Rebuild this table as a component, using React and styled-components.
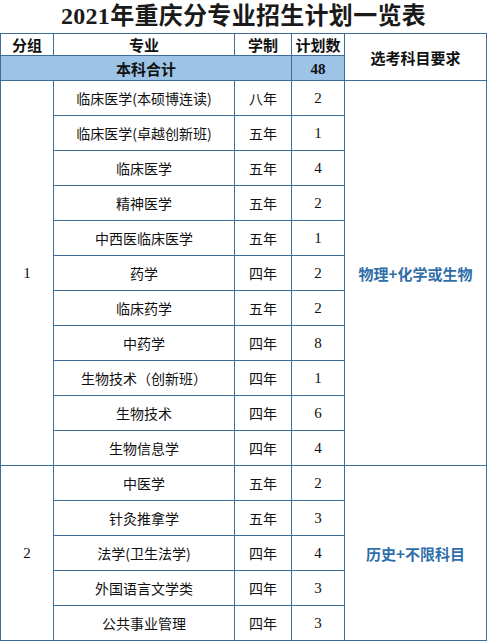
import styled, { createGlobalStyle } from "styled-components"

const lineColor = "#3f6d99"

const GlobalStyle = createGlobalStyle`
    body {
        margin: 0;
        background: #ffffff;
        font-family: "Noto Sans CJK SC", "Liberation Sans", sans-serif;
        color: #111;
    }
`;

const Page = styled.div`
    width: 487px;
    display: flex;
    flex-direction: column;
`;

const Title = styled.h1`
    margin: 0;
    height: 33px;
    line-height: 33px;
    text-align: center;
    font-family: "Liberation Serif", "Noto Sans CJK SC", serif;
    font-size: 24px;
    font-weight: 700;
    color: #1a1a1a;
    letter-spacing: 0.3px;
`;

const Table = styled.table`
    width: 486px;
    border-collapse: collapse;
    table-layout: fixed;
`;

const Cell = styled.td`
    border: 1px solid ${lineColor};
    padding: 0;
    height: ${(p) => p.$h || 34}px;
    text-align: center;
    vertical-align: middle;
    font-size: ${(p) => (p.$bold ? 15 : 14)}px;
    font-weight: ${(p) => (p.$bold ? 700 : 400)};
    background: ${(p) => (p.$fill ? "#9dc3e6" : "#ffffff")};
    color: ${(p) => (p.$blue ? "#2f6ea9" : "#111")};
    white-space: nowrap;
    line-height: 1;
`;

const Num = styled.span`
    font-family: "Liberation Serif", "Noto Sans CJK SC", serif;
    font-size: 15px;
`;

const groups = [
    {
        id: "1",
        need: "物理+化学或生物",
        rows: [
            ["临床医学(本硕博连读)", "八年", "2"],
            ["临床医学(卓越创新班)", "五年", "1"],
            ["临床医学", "五年", "4"],
            ["精神医学", "五年", "2"],
            ["中西医临床医学", "五年", "1"],
            ["药学", "四年", "2"],
            ["临床药学", "五年", "2"],
            ["中药学", "四年", "8"],
            ["生物技术（创新班）", "四年", "1"],
            ["生物技术", "四年", "6"],
            ["生物信息学", "四年", "4"],
        ],
    },
    {
        id: "2",
        need: "历史+不限科目",
        rows: [
            ["中医学", "五年", "2"],
            ["针灸推拿学", "五年", "3"],
            ["法学(卫生法学)", "四年", "4"],
            ["外国语言文学类", "四年", "3"],
            ["公共事业管理", "四年", "3"],
        ],
    },
]

function App() {
    return (
        <Page>
            <GlobalStyle />
            <Title>2021年重庆分专业招生计划一览表</Title>
            <Table>
                <colgroup>
                    <col style={{ width: 53 }} />
                    <col style={{ width: 181 }} />
                    <col style={{ width: 57 }} />
                    <col style={{ width: 53 }} />
                    <col style={{ width: 142 }} />
                </colgroup>
                <tbody>
                    <tr>
                        <Cell $bold $h={21}>分组</Cell>
                        <Cell $bold $h={21}>专业</Cell>
                        <Cell $bold $h={21}>学制</Cell>
                        <Cell $bold $h={21}>计划数</Cell>
                        <Cell $bold rowSpan={2}>选考科目要求</Cell>
                    </tr>
                    <tr>
                        <Cell $bold $fill $h={24} colSpan={3}>本科合计</Cell>
                        <Cell $bold $fill $h={24}><Num>48</Num></Cell>
                    </tr>
                    {groups.map((g) =>
                        g.rows.map((r, i) => (
                            <tr key={g.id + r[0]}>
                                {i === 0 && (
                                    <Cell rowSpan={g.rows.length}><Num>{g.id}</Num></Cell>
                                )}
                                <Cell>{r[0]}</Cell>
                                <Cell>{r[1]}</Cell>
                                <Cell><Num>{r[2]}</Num></Cell>
                                {i === 0 && (
                                    <Cell $bold $blue rowSpan={g.rows.length}>{g.need}</Cell>
                                )}
                            </tr>
                        ))
                    )}
                </tbody>
            </Table>
        </Page>
    )
}

export default App;
